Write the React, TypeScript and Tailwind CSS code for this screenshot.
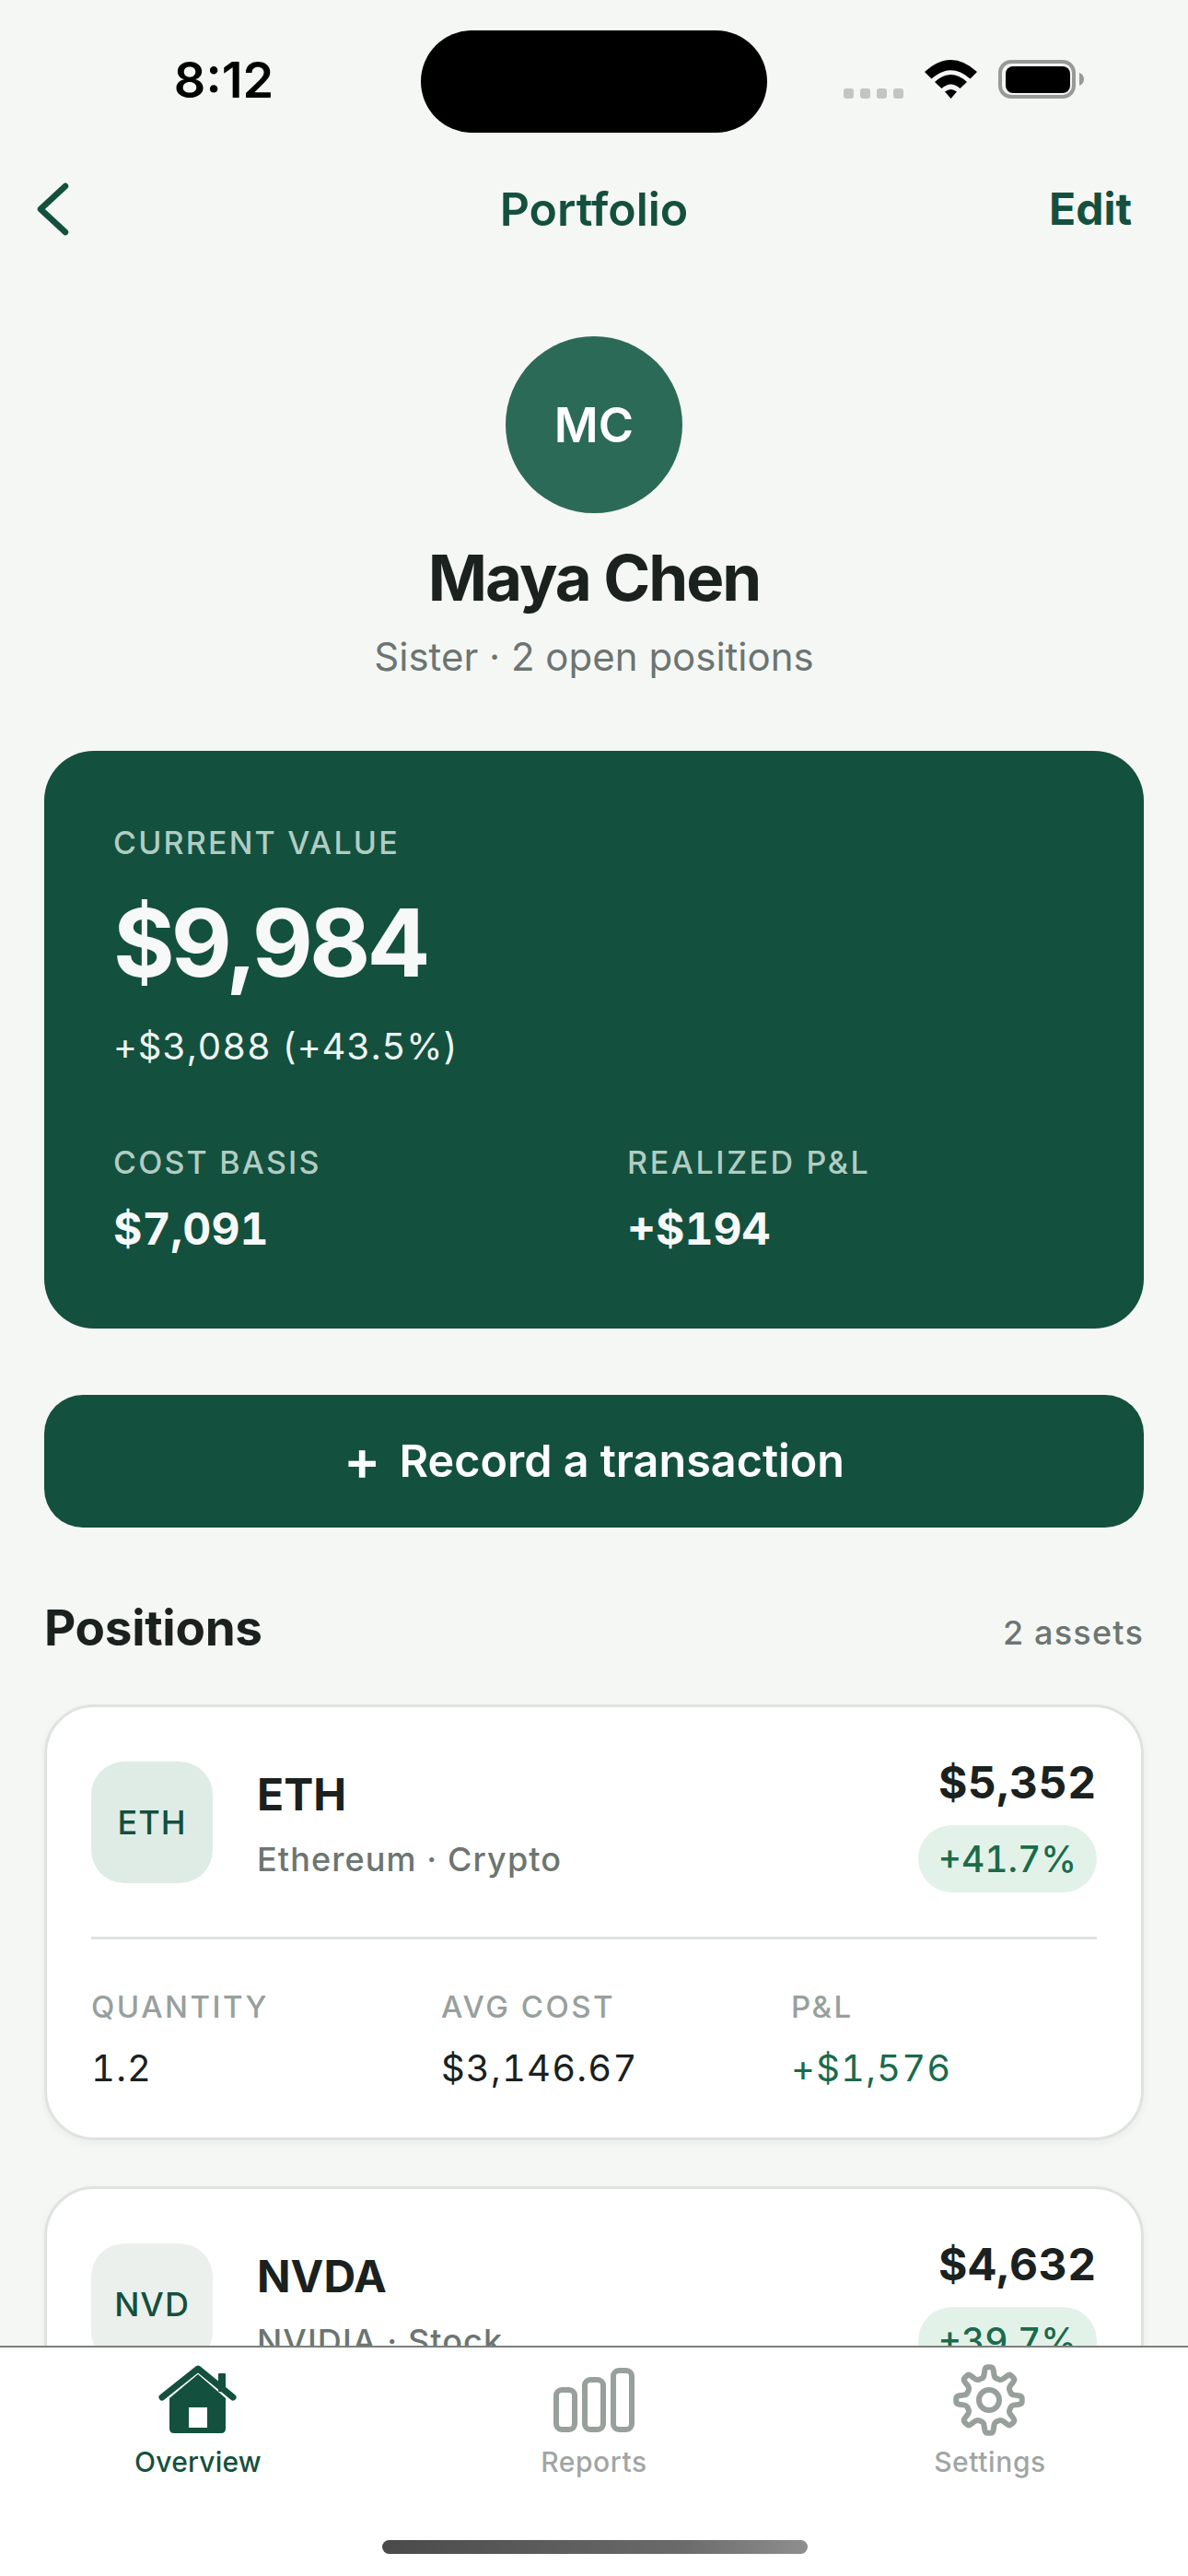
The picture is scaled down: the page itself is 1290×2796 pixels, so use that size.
function gearPath(cx: number, cy: number, rOuter: number, rInner: number, teeth: number) {
  const points: [number, number][] = [];
  const step = (Math.PI * 2) / teeth;
  for (let i = 0; i < teeth; i++) {
    const a = -Math.PI / 2 + i * step;
    const spots: [number, number][] = [
      [rInner, a - step * 0.3],
      [rOuter, a - step * 0.15],
      [rOuter, a + step * 0.15],
      [rInner, a + step * 0.3],
    ];
    for (const [r, t] of spots) {
      points.push([cx + r * Math.cos(t), cy + r * Math.sin(t)]);
    }
  }
  const mix = (p: [number, number], q: [number, number], k: number) => `${(p[0] + (q[0] - p[0]) * k).toFixed(2)} ${(p[1] + (q[1] - p[1]) * k).toFixed(2)}`;
  const n = points.length;
  let d = "";
  points.forEach((p, i) => {
    const prev = points[(i + n - 1) % n];
    const next = points[(i + 1) % n];
    d += `${i === 0 ? "M" : "L"}${mix(p, prev, 0.3)}Q${p[0].toFixed(2)} ${p[1].toFixed(2)} ${mix(p, next, 0.3)}`;
  });
  return `${d}Z`;
}

function Wifi() {
  return (
    <svg width="57" height="42" viewBox="0 0 57 42" className="block">
      <path d="M0 13 Q28.5 -13 57 13 L49.5 20.5 Q28.5 2 7.5 20.5Z" fill="#000" />
      <path d="M11 24 Q28.5 8 46 24 L38.5 31 Q28.5 22 18.5 31Z" fill="#000" />
      <path d="M22 34.5 Q28.5 29.5 35 34.5 L28.5 42Z" fill="#000" />
    </svg>
  );
}

function Battery() {
  return (
    <svg width="93" height="42" viewBox="0 0 93 42" className="block">
      <rect x="2" y="2" width="80" height="38" rx="12" fill="none" stroke="#999" strokeWidth="4" />
      <rect x="8" y="7" width="70" height="29" rx="8" fill="#000" />
      <path d="M88 14 Q93 16 93 21 Q93 26 88 28Z" fill="#999" />
    </svg>
  );
}

function StatusBar() {
  return (
    <div className="flex h-[177px] shrink-0 items-start">
      <div className="mt-[61px] w-[457px] pl-[29px] text-center text-[54px] leading-[52px] font-semibold text-black">8:12</div>
      <div className="mt-[33px] h-[111px] w-[376px] rounded-[56px] bg-black" />
      <div className="mt-[65px] ml-[83px] flex h-[42px] items-end">
        <div className="flex gap-[7px]">
          <div className="h-[11px] w-[11px] rounded-[3px] bg-[#c4c4c4]" />
          <div className="h-[11px] w-[11px] rounded-[3px] bg-[#c4c4c4]" />
          <div className="h-[11px] w-[11px] rounded-[3px] bg-[#c4c4c4]" />
          <div className="h-[11px] w-[11px] rounded-[3px] bg-[#c4c4c4]" />
        </div>
        <div className="ml-[23px]"><Wifi /></div>
        <div className="ml-[23px]"><Battery /></div>
      </div>
    </div>
  );
}

function NavBar() {
  return (
    <div className="flex h-[100px] shrink-0 items-center justify-between pr-[61px] pl-[40px]">
      <div className="w-[201px]">
        <svg width="36" height="60" viewBox="0 0 36 60" className="block">
          <path d="M31 5 L4 30 L31 55" fill="none" stroke="#14503e" strokeWidth="6.5" strokeLinecap="round" strokeLinejoin="round" />
        </svg>
      </div>
      <div className="text-[50px] font-semibold text-[#14503e]">Portfolio</div>
      <div className="w-[180px] text-right text-[48px] font-bold text-[#14503e]">Edit</div>
    </div>
  );
}

function Stat({ label, value, tone }: { label: string; value: string; tone?: string }) {
  return (
    <div>
      <div className="text-[33px] leading-[44px] font-medium tracking-[2.5px] text-[#98a09c]">{label}</div>
      <div className={`mt-[20px] text-[40px] leading-[50px] tracking-[1.2px] tabular-nums ${tone ?? "text-[#1a211e]"}`}>{value}</div>
    </div>
  );
}

function PositionCard({ sym, short, tile, desc, value, pct, qty, cost, pl }: { sym: string; short: string; tile: string; desc: string; value: string; pct: string; qty: string; cost: string; pl: string }) {
  return (
    <div className="rounded-[54px] border-[3px] border-[#dfe3e0] bg-white p-[48px] shadow-[0_3px_9px_rgba(20,40,30,0.05)]">
      <div className="flex items-start justify-between border-b-[3px] border-[#dfe3e0] pb-[48px]">
        <div className="flex items-start">
          <div className={`mt-[11px] flex h-[132px] w-[132px] items-center justify-center rounded-[36px] text-[36px] font-medium tracking-[1px] text-[#14503e] ${tile}`}>{short}</div>
          <div className="ml-[48px]">
            <div className="mt-[16px] text-[48px] leading-[62px] font-bold text-[#1a211e]">{sym}</div>
            <div className="mt-[15px] text-[36px] leading-[48px] font-medium tracking-[1.1px] text-[#6c7571]">{desc}</div>
          </div>
        </div>
        <div className="flex flex-col items-end">
          <div className="mt-[5px] text-[48px] leading-[58px] font-bold tracking-[0.6px] tabular-nums text-[#1a211e]">{value}</div>
          <div className="mt-[17px] rounded-full bg-[#e3f2e9] px-[22px] py-[15px] text-[39px] leading-[43px] font-medium tabular-nums text-[#1a6b4b]">{pct}</div>
        </div>
      </div>
      <div className="mt-[51px] grid grid-cols-3 gap-[48px] pb-[2px]">
        <Stat label="QUANTITY" value={qty} />
        <Stat label="AVG COST" value={cost} />
        <Stat label="P&L" value={pl} tone="text-[#1a6b4b]" />
      </div>
    </div>
  );
}

function Hero() {
  return (
    <div className="rounded-[54px] bg-[#14503e] px-[75px] pt-[78px] pb-[78px] text-[#f6f9f7]">
      <div className="text-[34px] leading-[44px] font-medium tracking-[2.2px] text-[#b0cdc3]">CURRENT VALUE</div>
      <div className="mt-[28px] text-[102px] leading-[116px] font-bold tracking-[-4px]">$9,984</div>
      <div className="mt-[29px] text-[40px] leading-[52px] tracking-[0.8px] tabular-nums text-[#eef5f1]">+$3,088 (+43.5%)</div>
      <div className="mt-[78px] flex">
        <div className="w-[558px]">
          <div className="text-[34px] leading-[44px] font-medium tracking-[2.2px] text-[#b0cdc3]">COST BASIS</div>
          <div className="mt-[20px] text-[48px] leading-[60px] font-bold tabular-nums">$7,091</div>
        </div>
        <div>
          <div className="text-[34px] leading-[44px] font-medium tracking-[2.6px] text-[#b0cdc3]">REALIZED P&L</div>
          <div className="mt-[20px] text-[48px] leading-[60px] font-bold tabular-nums">+$194</div>
        </div>
      </div>
    </div>
  );
}

function TabBar() {
  return (
    <div className="relative z-10 flex h-[250px] shrink-0 justify-around border-t-[2px] border-[#7b807d] bg-white">
      <div className="flex w-[430px] flex-col items-center pt-[18px]">
        <svg width="88" height="78" viewBox="0 0 88 78" className="block">
          <path d="M13 37 L44 11 L74 37 V70 Q74 75 69 75 H18 Q13 75 13 70Z" fill="#14503e" />
          <rect x="34" y="47" width="20" height="22" fill="#fff" />
          <path d="M5 36 L44 5 L82 36" fill="none" stroke="#14503e" strokeWidth="7" strokeLinecap="round" strokeLinejoin="round" />
          <rect x="66" y="10" width="8" height="20" rx="1" fill="#14503e" />
        </svg>
        <div className="mt-[8px] text-[30px] leading-[40px] font-medium tracking-[0.2px] text-[#14503e]">Overview</div>
      </div>
      <div className="flex w-[430px] flex-col items-center pt-[18px]">
        <svg width="92" height="78" viewBox="0 0 92 78" className="block">
          <rect x="5" y="28" width="20" height="43" rx="6" fill="none" stroke="#98a09c" strokeWidth="6" />
          <rect x="36" y="17" width="20" height="54" rx="6" fill="none" stroke="#98a09c" strokeWidth="6" />
          <rect x="67" y="7" width="20" height="64" rx="6" fill="none" stroke="#98a09c" strokeWidth="6" />
        </svg>
        <div className="mt-[8px] text-[30px] leading-[40px] font-medium tracking-[0.6px] text-[#a0a6a3]">Reports</div>
      </div>
      <div className="flex w-[430px] flex-col items-center pt-[18px]">
        <svg width="82" height="78" viewBox="0 0 82 78" className="block">
          <path d={gearPath(40, 39, 36, 25, 8)} fill="none" stroke="#98a09c" strokeWidth="6" strokeLinejoin="round" />
          <circle cx="40" cy="39" r="11" fill="none" stroke="#98a09c" strokeWidth="6" />
        </svg>
        <div className="mt-[8px] text-[30px] leading-[40px] font-medium tracking-[0.6px] text-[#a0a6a3]">Settings</div>
      </div>
      <div className="absolute bottom-[24px] left-[415px] h-[15px] w-[462px] rounded-full bg-[linear-gradient(90deg,#4a4a4a,#6a6a6a_70%,#8f8f8f)]" />
    </div>
  );
}

export default function App() {
  return (
    <div className="flex h-[2796px] w-[1290px] flex-col overflow-hidden bg-[#f5f7f5] font-['Inter',sans-serif]">
      <StatusBar />
      <NavBar />
      <div className="min-h-0 flex-1 overflow-hidden px-[48px]">
        <div className="mt-[88px] flex flex-col items-center">
          <div className="flex h-[192px] w-[192px] items-center justify-center rounded-full bg-[#2c6a58] pt-[2px] text-[52px] font-semibold text-white">MC</div>
          <div className="mt-[28px] text-[69px] leading-[84px] font-bold tracking-[-2px] text-[#1a211e]">Maya Chen</div>
          <div className="mt-[17px] text-[42px] leading-[54px] text-[#6c7571]">Sister · 2 open positions</div>
        </div>
        <div className="mt-[75px]"><Hero /></div>
        <div className="mt-[72px] flex h-[144px] items-center justify-center gap-[20px] rounded-[42px] bg-[#14503e] text-[48.5px] font-semibold text-white">
          <span className="mt-[-4px] text-[60px] leading-[60px] font-semibold">+</span>
          <span>Record a transaction</span>
        </div>
        <div className="mt-[76px] flex items-center justify-between">
          <div className="text-[53px] leading-[66px] font-bold tracking-[-0.3px] text-[#1a211e]">Positions</div>
          <div className="mt-[10px] text-[36px] font-medium tracking-[1.2px] text-[#6c7571]">2 assets</div>
        </div>
        <div className="mt-[50px] flex flex-col gap-[50px]">
          <PositionCard sym="ETH" short="ETH" tile="bg-[#dfece6]" desc="Ethereum · Crypto" value="$5,352" pct="+41.7%" qty="1.2" cost="$3,146.67" pl="+$1,576" />
          <PositionCard sym="NVDA" short="NVD" tile="bg-[#ebf0ed]" desc="NVIDIA · Stock" value="$4,632" pct="+39.7%" qty="4" cost="$829" pl="+$1,312" />
        </div>
      </div>
      <TabBar />
    </div>
  );
}
